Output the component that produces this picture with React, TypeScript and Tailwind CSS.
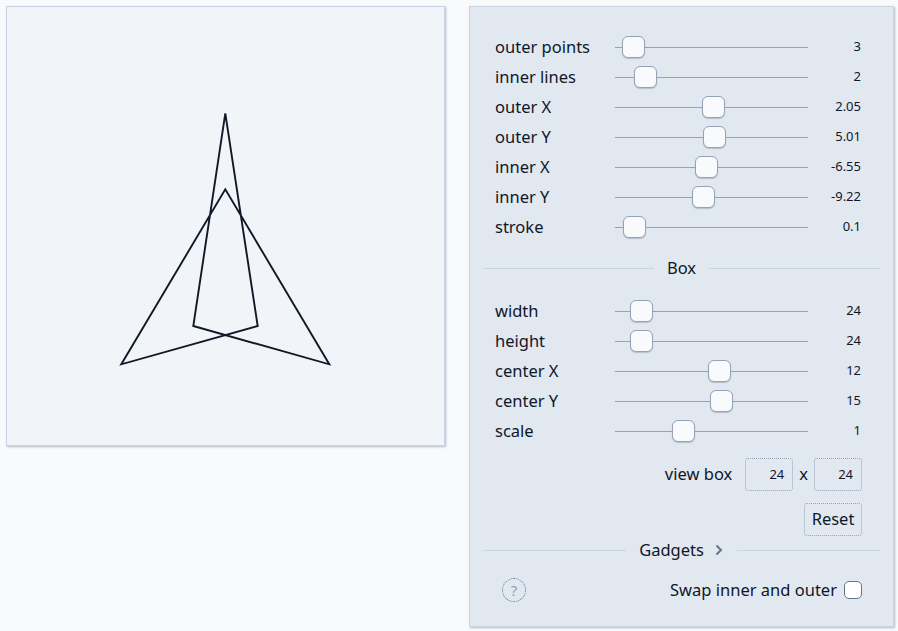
import React from "react";

const font = { fontFamily: '"Noto Sans", "Open Sans", sans-serif' };

type Row = { label: string; value: string; pos: number };

const rowsA: Row[] = [
  { label: "outer points", value: "3", pos: 6.7 },
  { label: "inner lines", value: "2", pos: 18.7 },
  { label: "outer X", value: "2.05", pos: 86.7 },
  { label: "outer Y", value: "5.01", pos: 88.3 },
  { label: "inner X", value: "-6.55", pos: 80 },
  { label: "inner Y", value: "-9.22", pos: 77.3 },
  { label: "stroke", value: "0.1", pos: 8 },
];

const rowsB: Row[] = [
  { label: "width", value: "24", pos: 14.7 },
  { label: "height", value: "24", pos: 14.7 },
  { label: "center X", value: "12", pos: 92.7 },
  { label: "center Y", value: "15", pos: 95.3 },
  { label: "scale", value: "1", pos: 56.7 },
];

function SliderRow({ r }: { r: Row }) {
  return (
    <div className="grid grid-cols-[120px_193px_1fr] items-center h-[30px] pl-3 pr-[19px]">
      <span className="text-[16.5px] text-[#0f172a] leading-none">{r.label}</span>
      <div className="relative h-[30px] flex items-center">
        <div className="w-full h-px bg-[#94a3b8]" />
        <div
          className="absolute top-[4px] w-[23px] h-[22px] rounded-[6px] bg-[#f8fafc] border border-[#94a3b8] shadow-[0_1px_1px_rgba(100,116,139,0.35)]"
          style={{ left: r.pos }}
        />
      </div>
      <span className="text-right text-[13px] text-[#0f172a]">{r.value}</span>
    </div>
  );
}

function Divider({ children, h }: { children: React.ReactNode; h: string }) {
  return (
    <div className={`flex items-center gap-[13px] ${h}`}>
      <div className="flex-1 h-px bg-[#cbd5e1]" />
      {children}
      <div className="flex-1 h-px bg-[#cbd5e1]" />
    </div>
  );
}

export default function App() {
  return (
    <div className="min-h-screen bg-[#f8fafc] flex items-start gap-[24px] pl-[6px] pt-[6px]" style={font}>
      <div className="w-[439px] h-[440px] border border-[#c8d3e4] bg-[#f1f5fa] shadow-[1px_1px_2px_rgba(100,116,139,0.45)]">
        <svg width="437" height="438" viewBox="0 0 437 438" className="block">
          <polygon
            points="218.3,106.3 186.3,319 322.3,357.3 218.3,182.3 114.3,357.3 250.7,319"
            fill="none"
            stroke="#111827"
            strokeWidth="1.9"
            strokeLinejoin="miter"
          />
        </svg>
      </div>

      <div className="w-[425px] h-[621px] border border-[#cbd5e1] bg-[#e2e8f0] px-[13px] pt-[25px] shadow-[1px_1px_2px_rgba(100,116,139,0.45)] text-[#0f172a]">
        {rowsA.map((r) => (
          <SliderRow key={r.label} r={r} />
        ))}
        <Divider h="h-[52px] mb-[2px]">
          <span className="text-[16.5px]">Box</span>
        </Divider>
        {rowsB.map((r) => (
          <SliderRow key={r.label} r={r} />
        ))}
        <div className="flex justify-end items-center mt-[12px] pr-[18px] h-[33px]">
          <span className="text-[16.5px] mr-[13px]">view box</span>
          <div className="w-[48px] h-[33px] border border-dotted border-[#94a3b8] rounded-[3px] flex items-center justify-end pr-[8px] text-[13px]">
            24
          </div>
          <span className="text-[16.5px] mx-[6px]">x</span>
          <div className="w-[48px] h-[33px] border border-dotted border-[#94a3b8] rounded-[3px] flex items-center justify-end pr-[8px] text-[13px]">
            24
          </div>
        </div>
        <div className="flex justify-end mt-[12px] pr-[18px]">
          <div className="w-[58px] h-[33px] border border-dotted border-[#94a3b8] rounded-[3px] flex items-center justify-center text-[16.5px]">
            Reset
          </div>
        </div>
        <Divider h="h-[28px]">
          <span className="flex items-center gap-[10px]">
            <span className="text-[16.5px]">Gadgets</span>
            <svg width="10" height="12" viewBox="0 0 10 12">
              <path d="M2.5 1.5 L7 6 L2.5 10.5" fill="none" stroke="#64748b" strokeWidth="2" />
            </svg>
          </span>
        </Divider>
        <div className="flex items-center justify-between h-[30px] mt-[11px] pl-[19px] pr-[18px]">
          <div className="w-[24px] h-[24px] rounded-full border border-dotted border-[#64748b] flex items-center justify-center text-[15px] text-[#94a3b8]">
            ?
          </div>
          <div className="flex items-center gap-[7px]">
            <span className="text-[16.5px]">Swap inner and outer</span>
            <div className="w-[18px] h-[18px] rounded-[5px] border border-[#64748b] bg-white" />
          </div>
        </div>
      </div>
    </div>
  );
}
